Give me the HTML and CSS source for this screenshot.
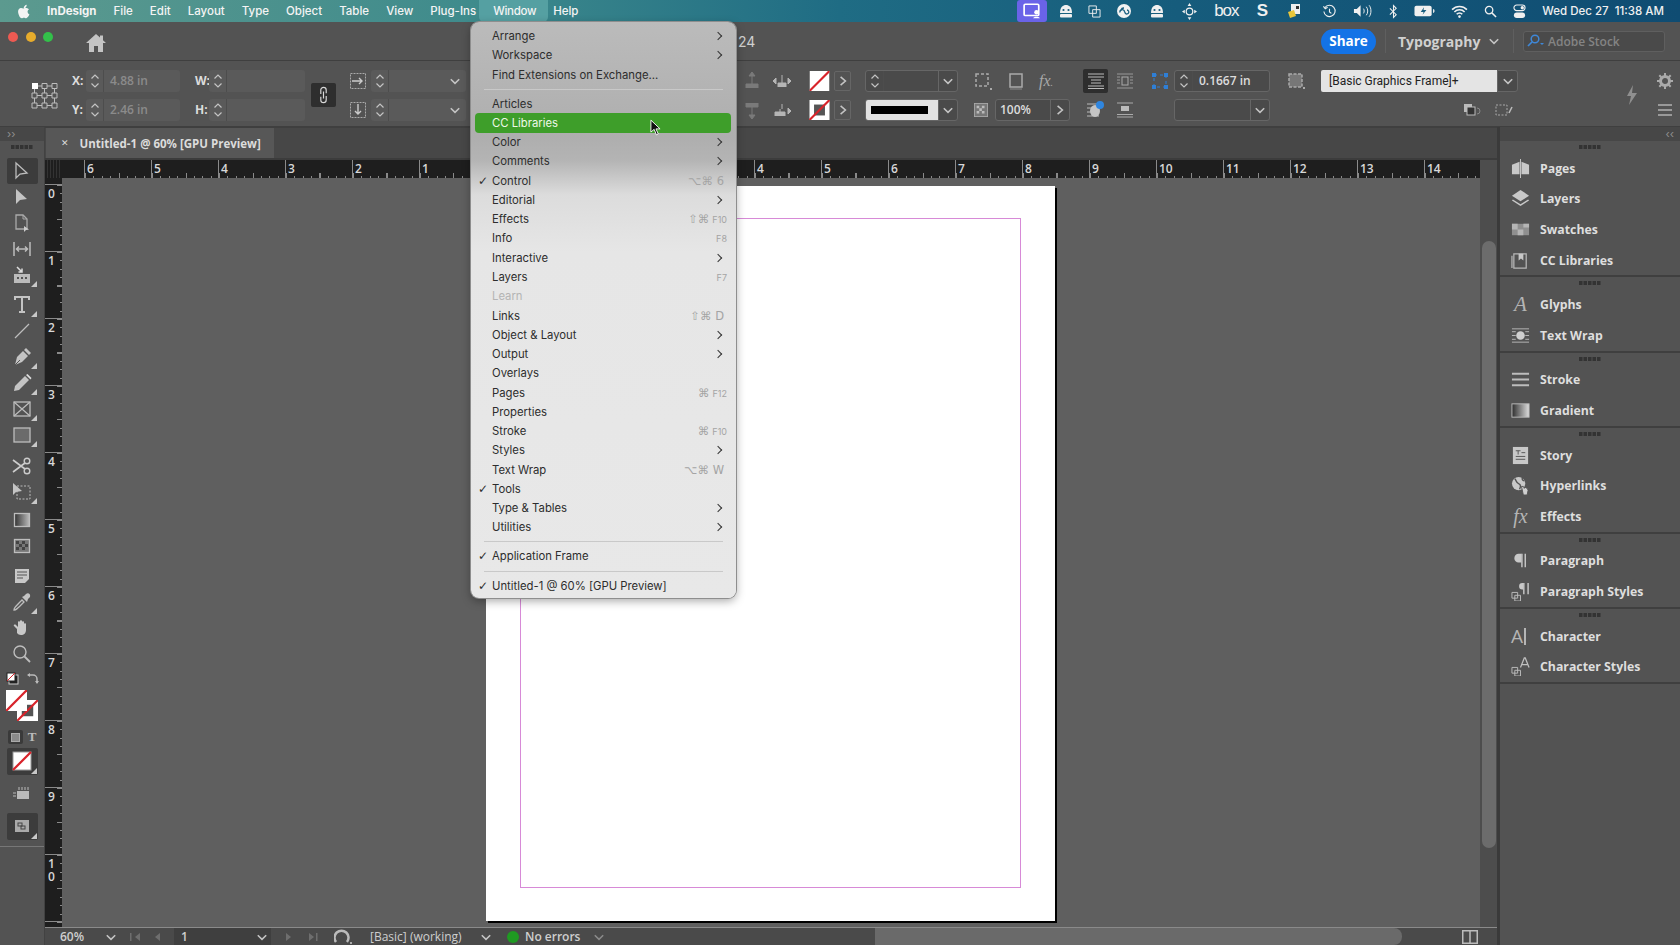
FILE: index.html
```html
<!DOCTYPE html>
<html lang="en">
<head>
    <meta charset="UTF-8">
    <meta name="viewport" content="width=device-width, initial-scale=1.0">
    <title>InDesign - Window menu</title>
    <link rel="stylesheet" href="styles.css">
</head>
<body>
    <svg class="defs" width="0" height="0">
        <symbol id="step" viewBox="0 0 12 18"><path d="M2.5 6.5 6 3l3.5 3.5M2.5 11.5 6 15l3.5-3.5" fill="none" stroke="currentColor" stroke-width="1.2"/></symbol>
        <symbol id="chev" viewBox="0 0 10 10"><path d="M1.5 3.5 5 7l3.5-3.5" fill="none" stroke="currentColor" stroke-width="1.3"/></symbol>
        <symbol id="right" viewBox="0 0 10 10"><path d="M3 1.5 7 5 3 8.5" fill="none" stroke="currentColor" stroke-width="1.3"/></symbol>
        <symbol id="robot" viewBox="0 0 16 16"><path d="M2 10C2 4 5 2 8 2s6 2 6 8z" fill="currentColor"/><rect x="2" y="11" width="12" height="3.5" rx="1" fill="currentColor"/><circle cx="5.5" cy="7" r="1.1" fill="#1a5f80"/><circle cx="10.5" cy="7" r="1.1" fill="#1a5f80"/></symbol>
        <symbol id="grip" viewBox="0 0 22 4"><path d="M0 0h3.5v4H0zM4.5 0H8v4H4.500zM9 0h3.500v4H9zM13.500 0H17v4h-3.500zM18 0h3.500v4H18z" fill="#333"/></symbol>
        <symbol id="slash" viewBox="0 0 22 22"><rect width="22" height="22" fill="#fff"/><path d="M0 22 22 0" stroke="#d8232a" stroke-width="2.4"/></symbol>
    </svg>

    <!-- mac menu bar -->
    <header class="menubar">
        <svg class="apple" viewBox="0 0 16 18"><path d="M11.300 1c.1 1.200-.4 2.200-1 3-.7.800-1.700 1.300-2.600 1.200-.1-1.100.4-2.200 1-2.900C9.400 1.500 10.500 1 11.300 1zM14 6.300c-1 .7-1.700 1.700-1.700 3 0 1.500.9 2.600 2.200 3.100-.3 1-.8 1.900-1.400 2.700-.7 1-1.500 1.900-2.600 1.900-1 0-1.400-.6-2.600-.6s-1.600.6-2.600.6c-1.100 0-1.900-1-2.700-2.100C1.400 12.500.9 10.700.9 9c0-2.700 1.800-4.200 3.500-4.200 1.100 0 2 .7 2.700.7.700 0 1.700-.8 3-.8 1 0 2.900.4 3.900 1.600z" fill="#f4f4f4"/></svg>
        <nav class="mainmenu">
            <span class="app">InDesign</span>
            <span>File</span>
            <span>Edit</span>
            <span>Layout</span>
            <span>Type</span>
            <span>Object</span>
            <span>Table</span>
            <span>View</span>
            <span>Plug-Ins</span>
            <span class="open">Window</span>
            <span>Help</span>
        </nav>
        <div class="tray">
            <span class="tray-on"><svg viewBox="0 0 16 14" width="18" height="16"><rect x="1" y="1" width="13" height="10" rx="1" fill="none" stroke="#fff" stroke-width="1.500"/><circle cx="12" cy="8" r="2" fill="#fff"/><path d="M9 13.500c0-2 6-2 6 0z" fill="#fff"/></svg></span>
            <span><svg width="16" height="16"><use href="#robot"/></svg></span>
            <span><svg viewBox="0 0 14 14" width="13" height="13"><path d="M1 1h8v8H1zM5 5h8v8H5z" fill="none" stroke="currentColor"/></svg></span>
            <span><svg viewBox="0 0 16 16" width="16" height="16"><circle cx="8" cy="8" r="7" fill="#f2f2f2"/><path d="M4 9.500a2.300 2.300 0 0 1 4.500-1l1 2a2 2 0 1 0 1.500-3.500M8 5a3 3 0 0 0-3 2" fill="none" stroke="#1a5f80" stroke-width="1.300"/></svg></span>
            <span><svg width="16" height="16"><use href="#robot"/></svg></span>
            <span><svg viewBox="0 0 16 18" width="15" height="17"><circle cx="8" cy="9" r="3.500" fill="none" stroke="currentColor" stroke-width="1.300"/><path d="M8 0l2 3H6zM8 18l2-3H6zM0 9l3-2v4zM16 9l-3-2v4z" fill="currentColor"/></svg></span>
            <span class="tray-word">box</span>
            <span class="tray-s">S</span>
            <span><svg viewBox="0 0 16 16" width="16" height="16"><path d="M4 1h9v10H4z" fill="#eee"/><path d="M1 9l6-2 2 6-6 2z" fill="#e8c63a"/><path d="M9 3h3v3H9z" fill="#333"/></svg></span>
            <span><svg viewBox="0 0 16 16" width="15" height="15"><path d="M3 4a6 6 0 1 1-1 4" fill="none" stroke="currentColor" stroke-width="1.200"/><path d="M1.500 2.500 3.500 5 6 3.500M8 5v3.500l2 1.500" fill="none" stroke="currentColor" stroke-width="1.200"/></svg></span>
            <span><svg viewBox="0 0 20 14" width="19" height="14"><path d="M1 5h3l4-4v12l-4-4H1z" fill="currentColor"/><path d="M11 4.500c1 1.500 1 3.500 0 5M14 2.500c2 2.500 2 6.500 0 9M17 1c2.500 3 2.500 9 0 12" fill="none" stroke="currentColor"/></svg></span>
            <span><svg viewBox="0 0 10 16" width="9" height="15"><path d="M1 4.500l7 7L5 14.500V1.500l3 3-7 7" fill="none" stroke="currentColor" stroke-width="1.200"/></svg></span>
            <span><svg viewBox="0 0 22 12" width="21" height="12"><rect x=".5" y=".5" width="18" height="11" rx="2" fill="currentColor"/><path d="M20 4v4c1 0 1.500-1 1.500-2s-.5-2-1.500-2z" fill="currentColor"/><path d="M10.500 2 7 7h3l-1 3 4-5h-3z" fill="#1a5f80"/></svg></span>
            <span><svg viewBox="0 0 18 14" width="17" height="13"><path d="M1 5a11 11 0 0 1 16 0M3.500 7.500a7.500 7.500 0 0 1 11 0M6 10a4 4 0 0 1 6 0" fill="none" stroke="currentColor" stroke-width="1.700"/><circle cx="9" cy="12.500" r="1.400" fill="currentColor"/></svg></span>
            <span><svg viewBox="0 0 14 14" width="13" height="13"><circle cx="5.500" cy="5.500" r="4" fill="none" stroke="currentColor" stroke-width="1.400"/><path d="M8.500 8.500 13 13" stroke="currentColor" stroke-width="1.600"/></svg></span>
            <span><svg viewBox="0 0 14 16" width="13" height="15"><rect x="1" y="1" width="12" height="6" rx="3" fill="none" stroke="currentColor" stroke-width="1.200"/><circle cx="10" cy="4" r="1.800" fill="currentColor"/><rect x="1" y="9" width="12" height="6" rx="3" fill="currentColor"/></svg></span>
            <span class="clock">Wed Dec 27&nbsp; 11:38 AM</span>
        </div>
    </header>

    <div class="window">
        <!-- title row -->
        <div class="titlebar">
            <div class="lights"><i class="red"></i><i class="amber"></i><i class="green"></i></div>
            <svg class="home" viewBox="0 0 20 18"><path d="M10 0 0 9h3v9h5v-6h4v6h5V9h3l-3-2.700V1.500h-3V3.600z" fill="#c4c4c4"/></svg>
            <span class="year">24</span>
            <button class="share">Share</button>
            <span class="tsep"></span>
            <span class="workspace">Typography</span>
            <svg class="i ws-chev"><use href="#chev"/></svg>
            <span class="tsep"></span>
            <div class="stock">
                <svg viewBox="0 0 18 14" width="18" height="14"><circle cx="9" cy="5" r="3.800" fill="none" stroke="#3f88d8" stroke-width="1.500"/><path d="M6 8 2 12" stroke="#3f88d8" stroke-width="1.700"/><path d="M14 9h4l-2 2z" fill="#3f88d8"/></svg>
                <span>Adobe Stock</span>
            </div>
        </div>

        <!-- control panel -->
        <div class="controlbar">
            <div class="c-ref">
                <svg class="vgrip" viewBox="0 0 4 22"><use href="#grip" transform="rotate(90 2 2)"/></svg>
                <svg class="refpoint" viewBox="0 0 27 27"><g fill="none" stroke="#bcbcbc"><path d="M11 1.500h5v5h-5zM21 1.500h5v5h-5zM1 11h5v5H1zM11 11h5v5h-5zM21 11h5v5h-5zM1 21h5v5H1zM11 21h5v5h-5zM21 21h5v5h-5zM6 4h5M16 4h5M6 13.500h5M16 13.500h5M6 23.500h5M16 23.500h5M3.500 6.500V11M13.500 6.500V11M23.500 6.500V11M3.500 16v5M13.500 16v5M23.500 16v5"/></g><rect x="1" y="1" width="6" height="6" fill="#fff"/></svg>
            </div>
            <div class="cgroup c-xy">
                <div class="crow"><label>X:</label><div class="field f94"><span class="step"><svg class="i"><use href="#step"/></svg></span><span class="val dim">4.88 in</span></div></div>
                <div class="crow"><label>Y:</label><div class="field f94"><span class="step"><svg class="i"><use href="#step"/></svg></span><span class="val dim">2.46 in</span></div></div>
            </div>
            <div class="cgroup c-wh">
                <div class="crow"><label>W:</label><div class="field f96"><span class="step"><svg class="i"><use href="#step"/></svg></span></div></div>
                <div class="crow"><label>H:</label><div class="field f96"><span class="step"><svg class="i"><use href="#step"/></svg></span></div></div>
            </div>
            <div class="c-link">
                <span class="darkbtn link"><svg viewBox="0 0 12 20" width="11" height="18"><path d="M3 9V4.500a3 3 0 0 1 6 0V8M9 11v4.500a3 3 0 0 1-6 0V12M6 6v8" fill="none" stroke="#d8d8d8" stroke-width="1.300"/></svg></span>
            </div>
            <div class="cgroup c-flip">
                <div class="crow"><svg class="ico16" viewBox="0 0 16 16"><rect x=".5" y=".5" width="15" height="15" fill="none" stroke="#aaa" stroke-dasharray="2 1"/><path d="M2 8h10M9 5l3 3-3 3" fill="none" stroke="#ccc" stroke-width="1.400"/></svg><div class="field f95"><span class="step"><svg class="i"><use href="#step"/></svg></span><svg class="i end"><use href="#chev"/></svg></div></div>
                <div class="crow"><svg class="ico16" viewBox="0 0 16 16"><rect x=".5" y=".5" width="15" height="15" fill="none" stroke="#aaa" stroke-dasharray="2 1"/><path d="M8 2v10M5 9l3 3 3-3" fill="none" stroke="#ccc" stroke-width="1.400"/></svg><div class="field f95"><span class="step"><svg class="i"><use href="#step"/></svg></span><svg class="i end"><use href="#chev"/></svg></div></div>
            </div>
            <div class="cgroup c-align">
                <div class="crow">
                    <svg class="ico20 faint" viewBox="0 0 20 20"><path d="M10 1l3 4H7zM10 5v5M4 17v-4h12v4M10 10v7" fill="currentColor" stroke="currentColor"/></svg>
                    <svg class="ico20" viewBox="0 0 20 20"><path d="M1 10l3-3v6zM19 10l-3-3v6zM10 4v5M6 16v-4h8v4M10 9v7" fill="currentColor" stroke="currentColor"/></svg>
                </div>
                <div class="crow">
                    <svg class="ico20 faint" viewBox="0 0 20 20"><path d="M10 19l3-4H7zM10 15v-5M4 3v4h12V3M10 10V3" fill="currentColor" stroke="currentColor"/></svg>
                    <svg class="ico20" viewBox="0 0 20 20"><path d="M19 11l-3-3v6zM10 4v5M3 16v-4h10v4M8 9v7" fill="currentColor" stroke="currentColor"/></svg>
                </div>
            </div>
            <div class="cgroup c-swatch">
                <div class="crow"><svg class="swatch" viewBox="0 0 22 22"><use href="#slash"/></svg><span class="boxbtn"><svg class="i"><use href="#right"/></svg></span></div>
                <div class="crow"><svg class="swatch" viewBox="0 0 22 22"><rect width="22" height="22" fill="#fff"/><rect x="5" y="5" width="12" height="12" fill="#555"/><path d="M0 22 22 0" stroke="#d8232a" stroke-width="2.400"/></svg><span class="boxbtn"><svg class="i"><use href="#right"/></svg></span></div>
            </div>
            <div class="cgroup c-stroke">
                <div class="crow"><div class="field outlined f93"><span class="step"><svg class="i"><use href="#step"/></svg></span><span class="chevbox end"><svg class="i"><use href="#chev"/></svg></span></div></div>
                <div class="crow"><div class="field outlined f93"><span class="strokeprev"><i></i></span><span class="chevbox"><svg class="i"><use href="#chev"/></svg></span></div></div>
            </div>
            <div class="cgroup c-frame">
                <div class="crow fx-row">
                    <svg class="ico20" viewBox="0 0 20 20"><path d="M3 3h12v12H3z" fill="none" stroke="#aaa" stroke-width="1.500" stroke-dasharray="3 2"/><path d="M17 17h2v2h-2z" fill="#aaa"/></svg>
                    <svg class="ico20" viewBox="0 0 20 20"><rect x="4" y="3" width="12" height="13" fill="none" stroke="#aaa" stroke-width="1.500"/><path d="M4 18h12" stroke="#777" stroke-width="1.500"/></svg>
                    <span class="fx">fx<small>.</small></span>
                </div>
                <div class="crow">
                    <svg class="opac" viewBox="0 0 16 16"><rect x=".5" y=".5" width="15" height="15" fill="#777" stroke="#aaa"/><path d="M3 3h3v3H3zM9 3h3v3H9zM6 6h3v3H6zM3 9h3v3H3zM9 9h3v3H9z" fill="#bbb"/></svg>
                    <div class="field outlined f75"><span class="val">100%</span><span class="chevbox end"><svg class="i"><use href="#right"/></svg></span></div>
                </div>
            </div>
            <div class="cgroup c-wrap">
                <div class="crow">
                    <span class="darkbtn"><svg class="ico16" viewBox="0 0 16 16"><path d="M0 1h16M0 4h16M3 7h10M3 10h10M0 13h16M0 15.500h16" stroke="#bbb"/></svg></span>
                    <svg class="ico16 gap9" viewBox="0 0 16 16"><rect x="5" y="4" width="6" height="8" fill="none" stroke="#aaa"/><path d="M0 1h16M0 4h3M13 4h3M0 7h3M13 7h3M0 10h3M13 10h3M0 15h16" stroke="#999"/></svg>
                </div>
                <div class="crow">
                    <span class="plainbtn"><svg class="ico20" viewBox="0 0 20 20"><path d="M1 4h12M1 8h6M1 12h6M1 16h12" stroke="#bbb"/><ellipse cx="9" cy="11" rx="5" ry="6" fill="#c4c4c4"/><circle cx="14" cy="5" r="4" fill="#2f86e0"/></svg></span>
                    <svg class="ico16 gap9" viewBox="0 0 16 16"><path d="M0 1h16M0 15h16M0 12.500h16" stroke="#aaa"/><rect x="4" y="4" width="8" height="5" fill="#bbb"/></svg>
                </div>
            </div>
            <div class="cgroup c-corner">
                <div class="crow">
                    <svg class="ico20" viewBox="0 0 20 20"><path d="M4 4h12v12H4z" fill="none" stroke="#2f7fd6" stroke-dasharray="3 3"/><path d="M2 2h4v4H2zM14 2h4v4h-4zM2 14h4v4H2zM14 14h4v4h-4z" fill="#2f7fd6"/></svg>
                    <div class="field outlined f96 g4"><span class="step"><svg class="i"><use href="#step"/></svg></span><span class="val">0.1667 in</span></div>
                </div>
                <div class="crow">
                    <span class="ico20"></span>
                    <div class="field outlined f96 g4"><span class="chevbox end"><svg class="i"><use href="#chev"/></svg></span></div>
                </div>
            </div>
            <div class="cgroup c-fit">
                <div class="crow"><svg class="ico20" viewBox="0 0 20 20"><rect x="3" y="3" width="13" height="13" fill="#777" stroke="#aaa" stroke-width="1.500" stroke-dasharray="3 1.500"/><path d="M17 16h2v2h-2z" fill="#aaa"/></svg></div>
                <div class="crow"></div>
            </div>
            <div class="cgroup c-style">
                <div class="crow"><div class="objstyle"><span>[Basic Graphics Frame]+</span></div><span class="chevbox wide"><svg class="i"><use href="#chev"/></svg></span></div>
                <div class="crow row-end">
                    <svg class="ico20" viewBox="0 0 20 16"><rect x="1" y="2" width="8" height="8" fill="#bbb"/><rect x="4" y="5" width="8" height="8" fill="#333" stroke="#bbb"/><path d="M14 6a3 3 0 1 1 0 6" fill="none" stroke="#888"/></svg>
                    <svg class="ico20 g11" viewBox="0 0 20 16"><rect x="2" y="3" width="11" height="10" fill="none" stroke="#aaa" stroke-dasharray="2 1.500"/><path d="M15 11l3-6" stroke="#bbb" stroke-width="1.500"/></svg>
                </div>
            </div>
            <div class="c-end">
                <svg class="bolt" viewBox="0 0 12 20"><path d="M7 0 1 11h4L3 20l8-12H6z" fill="#8f8f8f"/></svg>
                <div class="end-col">
                    <svg class="ico16" viewBox="0 0 16 16"><circle cx="8" cy="8" r="4.500" fill="none" stroke="#aaa" stroke-width="3"/><path d="M8 0v3M8 13v3M0 8h3M13 8h3M2.300 2.300l2 2M11.700 11.700l2 2M2.300 13.700l2-2M11.700 4.300l2-2" stroke="#aaa" stroke-width="2"/></svg>
                    <svg class="ico16" viewBox="0 0 16 16"><path d="M1 3h14M1 8h14M1 13h14" stroke="#999" stroke-width="2"/></svg>
                </div>
            </div>
        </div>

        <div class="workarea">
            <!-- tools -->
            <aside class="toolbar">
                <div class="strip"><span class="dbl">&#8250;&#8250;</span></div>
                <svg class="pgrip tools-grip" viewBox="0 0 22 4"><use href="#grip"/></svg>
                <div class="tool dark"><svg viewBox="0 0 20 20"><path d="M4 2v15l4-4 7-1z" fill="none" stroke="#bdbdbd" stroke-width="1.300"/></svg></div>
                <div class="tool"><svg viewBox="0 0 20 20"><path d="M4 2v15l4-4 7-1z" fill="#c4c4c4"/></svg></div>
                <div class="tool"><svg viewBox="0 0 20 20"><path d="M4 2h7l4 4v10H4z" fill="none" stroke="#aaa" stroke-width="1.300"/><path d="M11 2v4h4" fill="none" stroke="#aaa"/><path d="M12 13v6l2-2 3-.5z" fill="#ccc"/></svg></div>
                <div class="tool"><svg viewBox="0 0 20 20"><path d="M2 3v14M18 3v14M5 10h10M7 7.500 4.500 10 7 12.500M13 7.500l2.500 2.500-2.500 2.500" fill="none" stroke="#bdbdbd" stroke-width="1.500"/></svg></div>
                <div class="tool sub"><svg viewBox="0 0 20 20"><path d="M2 9v9h16V9" fill="#bbb"/><path d="M5 2l5 5M6.500 7H10V3.500" fill="none" stroke="#ddd" stroke-width="1.500"/><path d="M5 12h2v2H5zM9 12h2v2H9zM13 12h2v2h-2z" fill="#555"/></svg></div>
                <div class="tool sub sp4"><svg viewBox="0 0 20 20"><path d="M3 5V2h14v3M10 2v15M7 17h6" fill="none" stroke="#c4c4c4" stroke-width="2"/></svg></div>
                <div class="tool"><svg viewBox="0 0 20 20"><path d="M3 17 17 3" stroke="#bdbdbd" stroke-width="1.300"/></svg></div>
                <div class="tool sub"><svg viewBox="0 0 20 20"><path d="M3 18l2-8 6-6 5 5-6 6z" fill="#c4c4c4"/><path d="M12 3l2-2 5 5-2 2z" fill="#c4c4c4"/><path d="M3 18l5-5" stroke="#555"/></svg></div>
                <div class="tool sub"><svg viewBox="0 0 20 20"><path d="M2 18l1-5L13 3l4 4L7 17z" fill="#c4c4c4"/><path d="M14 2l1.500-1 4 4-1 1.500z" fill="#ddd"/></svg></div>
                <div class="tool sub"><svg viewBox="0 0 20 20"><rect x="2" y="3" width="16" height="14" fill="none" stroke="#bdbdbd" stroke-width="1.300"/><path d="M2 3l16 14M18 3 2 17" stroke="#bdbdbd" stroke-width="1.200"/></svg></div>
                <div class="tool sub"><svg viewBox="0 0 20 20"><rect x="2" y="3" width="16" height="14" fill="#6b6b6b" stroke="#bdbdbd" stroke-width="1.300"/></svg></div>
                <div class="tool sp5"><svg viewBox="0 0 20 20"><circle cx="15" cy="5" r="2.800" fill="none" stroke="#ccc" stroke-width="1.400"/><circle cx="15" cy="15" r="2.800" fill="none" stroke="#ccc" stroke-width="1.400"/><path d="M1 4l12 9M1 16 13 7" stroke="#ccc" stroke-width="1.600"/></svg></div>
                <div class="tool sub"><svg viewBox="0 0 20 20"><rect x="5" y="4" width="13" height="13" fill="none" stroke="#bbb" stroke-dasharray="2 1.500"/><path d="M1 1v12l3-3 6-1z" fill="#c4c4c4"/></svg></div>
                <div class="tool sp2"><svg viewBox="0 0 20 20"><defs><linearGradient id="g1"><stop offset="0" stop-color="#333"/><stop offset="1" stop-color="#bbb"/></linearGradient></defs><rect x="2.500" y="3.500" width="15" height="13" fill="url(#g1)" stroke="#bdbdbd" stroke-width="1.300"/></svg></div>
                <div class="tool"><svg viewBox="0 0 20 20"><rect x="2.500" y="3.500" width="15" height="13" fill="#777" stroke="#bdbdbd" stroke-width="1.300"/><path d="M4 5h3v3H4zM10 5h3v3h-3zM7 8h3v3H7zM13 8h3v3h-3zM4 11h3v3H4zM10 11h3v3h-3z" fill="#444"/></svg></div>
                <div class="tool sp4"><svg viewBox="0 0 20 20"><path d="M3 3h14v10l-4 4H3z" fill="#c8c8c8"/><path d="M5 6h10M5 9h10M5 12h6" stroke="#555"/></svg></div>
                <div class="tool sub"><svg viewBox="0 0 20 20"><path d="M2 18c0-2 1-3 8-10l2 2c-7 7-8 8-10 8z" fill="none" stroke="#bdbdbd" stroke-width="1.300"/><path d="M10 5l5 5 1-3 2-2c1-3-2-5-4-3l-2 2z" fill="#c4c4c4"/></svg></div>
                <div class="tool"><svg viewBox="0 0 20 20"><path d="M5 11 2 8c-1-1 1-2 2-1l2 2V4c0-1 2-1 2 0v3-4c0-1 2-1 2 0v4-3c0-1 2-1 2 0v4-2c0-1 2-1 2 0v6c0 3-2 5-5 5-2 0-3-1-4-2z" fill="#c8c8c8"/></svg></div>
                <div class="tool"><svg viewBox="0 0 20 20"><circle cx="8" cy="8" r="6" fill="none" stroke="#bdbdbd" stroke-width="1.400"/><path d="M12.500 12.500 18 18" stroke="#bdbdbd" stroke-width="1.800"/></svg></div>
                <div class="colorswap">
                    <svg viewBox="0 0 13 13" width="13" height="13"><rect x="3" y="3" width="9" height="9" fill="#222" stroke="#ccc"/><rect x="1" y="1" width="8" height="8" fill="#fff" stroke="#222"/><path d="M1 9l8-8" stroke="#d8232a"/></svg>
                    <svg viewBox="0 0 13 13" width="13" height="13"><path d="M2 3h5a4 4 0 0 1 4 4v4" fill="none" stroke="#bbb" stroke-width="1.500"/><path d="M1 3l3-2v4zM11 12l-2-3h4z" fill="#bbb"/></svg>
                </div>
                <div class="fillstroke">
                    <svg class="fs-stroke" viewBox="0 0 22 22"><rect width="22" height="22" fill="#fff"/><rect x="5" y="5" width="12" height="12" fill="#535353"/><path d="M0 22 22 0" stroke="#d8232a" stroke-width="2.200"/></svg>
                    <svg class="fs-fill" viewBox="0 0 22 22"><use href="#slash"/></svg>
                </div>
                <div class="fmtrow">
                    <span class="fmtbtn"><i></i></span>
                    <span class="fmt-t">T</span>
                </div>
                <div class="tool dark big sub"><svg viewBox="0 0 20 20"><rect x="1" y="1" width="18" height="18" fill="#fff" stroke="#999"/><path d="M1 19 19 1" stroke="#d8232a" stroke-width="2.200"/></svg></div>
                <div class="tool view"><svg viewBox="0 0 20 20"><rect x="5" y="8" width="12" height="8" fill="#bbb"/><path d="M7 4v3M10 4v3M13 4v3M16 4v3M1 10h3M1 13h3" stroke="#bbb"/></svg></div>
                <div class="tool dark big sub lastbtn"><svg viewBox="0 0 20 20"><rect x="3" y="4" width="14" height="12" fill="#aaa"/><rect x="6" y="7" width="4" height="3" fill="none" stroke="#444"/><rect x="9" y="10" width="4" height="3" fill="none" stroke="#444"/></svg></div>
                <div class="toolend"></div>
            </aside>

            <!-- document area -->
            <section class="center">
                <div class="tabbar">
                    <div class="tab"><span class="tabx">&#10005;</span><span>Untitled-1 @ 60% [GPU Preview]</span></div>
                </div>
                <div class="hruler-row">
                    <div class="corner"></div>
                    <div class="hruler">
                        <div class="hlead"></div>
                        <div class="hcell">6</div><div class="hcell">5</div><div class="hcell">4</div><div class="hcell">3</div><div class="hcell">2</div><div class="hcell">1</div><div class="hcell"></div><div class="hcell"></div><div class="hcell"></div><div class="hcell"></div><div class="hcell">4</div><div class="hcell">5</div><div class="hcell">6</div><div class="hcell">7</div><div class="hcell">8</div><div class="hcell">9</div><div class="hcell">10</div><div class="hcell">11</div><div class="hcell">12</div><div class="hcell">13</div><div class="hcell">14</div>
                    </div>
                    <div class="rulerend"></div>
                </div>
                <div class="docrow">
                    <div class="vruler">
                        <div class="vlead"></div>
                        <div class="vcell">0</div><div class="vcell">1</div><div class="vcell">2</div><div class="vcell">3</div><div class="vcell">4</div><div class="vcell">5</div><div class="vcell">6</div><div class="vcell">7</div><div class="vcell">8</div><div class="vcell">9</div><div class="vcell">1<br>0</div><div class="vcell"></div>
                    </div>
                    <div class="canvas">
                        <div class="page"><div class="guide"></div></div>
                    </div>
                    <div class="vscroll"><div class="vthumb"></div></div>
                </div>
                <div class="statusbar">
                    <span class="st-zoom">60%</span>
                    <svg class="i st-c1"><use href="#chev"/></svg>
                    <svg class="st-nav" viewBox="0 0 60 12" width="60" height="12"><path d="M3 2h1.500v8H3zM13 2v8l-5-4zM33 2v8l-5-4z" fill="#6e6e6e"/></svg>
                    <div class="st-page"><span>1</span><span class="st-pagechev"><svg class="i"><use href="#chev"/></svg></span></div>
                    <svg class="st-nav2" viewBox="0 0 40 12" width="40" height="12"><path d="M3 2v8l5-4zM26 2v8l5-4zM33 2h1.500v8H33z" fill="#6e6e6e"/></svg>
                    <svg class="st-gauge" viewBox="0 0 18 16" width="18" height="16"><path d="M2 13a7 7 0 1 1 11 0" fill="none" stroke="#bbb" stroke-width="2.500"/><path d="M16 13h2v2h-2z" fill="#aaa"/></svg>
                    <span class="st-pre">[Basic] (working)</span>
                    <svg class="i st-c2"><use href="#chev"/></svg>
                    <i class="st-dot"></i>
                    <span class="st-err">No errors</span>
                    <svg class="i st-c3"><use href="#chev"/></svg>
                    <div class="hthumb"></div>
                    <svg class="st-split" viewBox="0 0 16 14" width="16" height="14"><path d="M.75.750h14.500v12.500H.75zM8 1v12" fill="none" stroke="#bbb" stroke-width="1.500"/></svg>
                </div>
            </section>

            <!-- docked panels -->
            <aside class="panels">
                <div class="strip right"><span class="dbl">&#8249;&#8249;</span></div>
                <div class="pgroup">
                    <svg class="pgrip" viewBox="0 0 22 4"><use href="#grip"/></svg>
                    <div class="prow"><svg viewBox="0 0 20 20"><path d="M1 6l8-3v13H1zM19 6l-8-3v13h8z" fill="#c8c8c8"/><path d="M10 0v20" stroke="#c8c8c8"/></svg><span>Pages</span></div>
                    <div class="prow"><svg viewBox="0 0 20 20"><path d="M10 1l9 6-9 6-9-6z" fill="#c8c8c8"/><path d="M2 11l8 5 8-5 1 1-9 6-9-6z" fill="#c8c8c8"/></svg><span>Layers</span></div>
                    <div class="prow"><svg viewBox="0 0 20 20"><rect x="1" y="4" width="18" height="12" fill="#8f8f8f"/><path d="M1 4h6v6H1zM13 4h6v4h-6zM7 10h6v6H7z" fill="#b5b5b5"/></svg><span>Swatches</span></div>
                    <div class="prow"><svg viewBox="0 0 20 20"><path d="M3 3h13v15H3zM1 5v13" fill="none" stroke="#b8b8b8" stroke-width="1.300"/><path d="M8 3h5v7l-2.500-2L8 10z" fill="#c8c8c8"/></svg><span>CC Libraries</span></div>
                </div>
                <div class="pgroup">
                    <svg class="pgrip" viewBox="0 0 22 4"><use href="#grip"/></svg>
                    <div class="prow"><span class="pglyph script">A</span><span>Glyphs</span></div>
                    <div class="prow"><svg viewBox="0 0 20 20"><path d="M1 3h18M1 6h4M15 6h4M1 10h4M15 10h4M1 14h4M15 14h4M1 17h18" stroke="#b8b8b8"/><circle cx="10" cy="10" r="4.500" fill="#cfcfcf"/></svg><span>Text Wrap</span></div>
                </div>
                <div class="pgroup">
                    <svg class="pgrip" viewBox="0 0 22 4"><use href="#grip"/></svg>
                    <div class="prow"><svg viewBox="0 0 20 20"><path d="M1 4h18M1 10h18M1 16h18" stroke="#bdbdbd" stroke-width="2"/></svg><span>Stroke</span></div>
                    <div class="prow"><svg viewBox="0 0 20 20"><defs><linearGradient id="g2"><stop offset="0" stop-color="#2d2d2d"/><stop offset="1" stop-color="#ddd"/></linearGradient></defs><rect x="1" y="3" width="18" height="14" fill="url(#g2)" stroke="#bbb"/></svg><span>Gradient</span></div>
                </div>
                <div class="pgroup">
                    <svg class="pgrip" viewBox="0 0 22 4"><use href="#grip"/></svg>
                    <div class="prow"><svg viewBox="0 0 20 20"><rect x="2" y="1" width="16" height="18" fill="#c8c8c8"/><path d="M5 5h5M7.500 5v4M11 7h4M5 11h10M5 14h10" stroke="#555"/></svg><span>Story</span></div>
                    <div class="prow"><svg viewBox="0 0 20 20"><circle cx="8" cy="8" r="7" fill="#c8c8c8"/><path d="M4 3c2 2 1 4 4 5s2 4 1 6M12 2c-1 2 1 3 2 3" fill="none" stroke="#535353" stroke-width="1.500"/><path d="M11 11l2 0 1 2 1-1 2 1 1 2-1 5h-4z" fill="#cfcfcf" stroke="#535353"/></svg><span>Hyperlinks</span></div>
                    <div class="prow"><span class="pglyph fxg">fx</span><span>Effects</span></div>
                </div>
                <div class="pgroup">
                    <svg class="pgrip" viewBox="0 0 22 4"><use href="#grip"/></svg>
                    <div class="prow"><svg viewBox="0 0 20 20"><path d="M15 3H8a4.500 4.500 0 0 0 0 9h3V3" fill="#c8c8c8"/><path d="M11.500 3v14M15 3v14" stroke="#c8c8c8" stroke-width="1.500"/></svg><span>Paragraph</span></div>
                    <div class="prow"><svg viewBox="0 0 20 20"><path d="M18 1h-6a3.500 3.500 0 0 0 0 7h1V1" fill="#c8c8c8"/><path d="M13.500 1v12M18 1v12" stroke="#c8c8c8" stroke-width="1.500"/><path d="M1 11h6v6H1zM4 14h6v6H4z" fill="#535353" stroke="#bbb"/></svg><span>Paragraph Styles</span></div>
                </div>
                <div class="pgroup">
                    <svg class="pgrip" viewBox="0 0 22 4"><use href="#grip"/></svg>
                    <div class="prow"><span class="pglyph ag">A<em></em></span><span>Character</span></div>
                    <div class="prow"><svg viewBox="0 0 20 20"><path d="M10 11l4-10h1l4 10M11.500 8h6" fill="none" stroke="#c0c0c0" stroke-width="1.300"/><path d="M1 11h6v6H1zM4 14h6v6H4z" fill="#535353" stroke="#bbb"/></svg><span>Character Styles</span></div>
                </div>
            </aside>
        </div>
    </div>

    <!-- open Window menu -->
    <div class="menu">
        <div class="mi sub">Arrange</div>
        <div class="mi sub">Workspace</div>
        <div class="mi">Find Extensions on Exchange...</div>
        <div class="msep"></div>
        <div class="mi">Articles</div>
        <div class="mi hot">CC Libraries</div>
        <div class="mi sub">Color</div>
        <div class="mi sub">Comments</div>
        <div class="mi on">Control<kbd>&#8997;&#8984; 6</kbd></div>
        <div class="mi sub">Editorial</div>
        <div class="mi">Effects<kbd>&#8679;&#8984;<small>F10</small></kbd></div>
        <div class="mi">Info<kbd><small>F8</small></kbd></div>
        <div class="mi sub">Interactive</div>
        <div class="mi">Layers<kbd><small>F7</small></kbd></div>
        <div class="mi off">Learn</div>
        <div class="mi">Links<kbd>&#8679;&#8984; D</kbd></div>
        <div class="mi sub">Object &amp; Layout</div>
        <div class="mi sub">Output</div>
        <div class="mi">Overlays</div>
        <div class="mi">Pages<kbd>&#8984;<small>F12</small></kbd></div>
        <div class="mi">Properties</div>
        <div class="mi">Stroke<kbd>&#8984;<small>F10</small></kbd></div>
        <div class="mi sub">Styles</div>
        <div class="mi">Text Wrap<kbd>&#8997;&#8984; W</kbd></div>
        <div class="mi on">Tools</div>
        <div class="mi sub">Type &amp; Tables</div>
        <div class="mi sub">Utilities</div>
        <div class="msep"></div>
        <div class="mi on">Application Frame</div>
        <div class="msep"></div>
        <div class="mi on">Untitled-1 @ 60% [GPU Preview]</div>
    </div>
    <svg class="cursor" viewBox="0 0 12 18"><path d="M1 1v13l3.500-3 2.500 6 2-1-2.500-5.500H11z" fill="#111" stroke="#fff" stroke-width="1"/></svg>
</body>
</html>
```

FILE: styles.css
```css
* {
    box-sizing: border-box;
}
html, body {
    margin: 0;
    padding: 0;
}
body {
    width: 1680px;
    height: 945px;
    overflow: hidden;
    position: relative;
    background: #535353;
    color: #d8d8d8;
    font-family: Inter, "Liberation Sans", sans-serif;
    font-size: 12px;
}
.defs {
    display: block;
    height: 0;
}
svg {
    display: block;
    flex: none;
}
.i {
    width: 12px;
    height: 12px;
    color: #c4c4c4;
}

/* menu bar */
.menubar {
    height: 22px;
    display: flex;
    align-items: center;
    padding-right: 16px;
    background: linear-gradient(90deg, #5c9a8f 0%, #3f8b8c 28%, #1f6c84 50%, #165c7c 70%, #0f4c72 100%);
    color: #f4f4f4;
    font-size: 11.5px;
    font-weight: 500;
}
.apple {
    width: 14px;
    height: 15px;
    margin-left: 17px;
}
.mainmenu {
    display: flex;
    height: 22px;
    margin-left: 16px;
    align-items: center;
}
.mainmenu span {
    padding-right: 17px;
    white-space: nowrap;
}
.mainmenu .app {
    font-weight: 700;
}
.mainmenu .open {
    height: 22px;
    line-height: 22px;
    margin-left: -14px;
    margin-right: 5px;
    padding: 0 12px 0 14px;
    background: #55a0a2;
    border-radius: 0 0 5px 5px;
    letter-spacing: -.3px;
}
.tray {
    margin-left: auto;
    display: grid;
    grid-template-columns: 30px 38px 18px 42px 24px 40px 34px 38px 28px 40px 26px 36px 26px 44px 18px 40px auto;
    align-items: center;
    height: 22px;
    color: #f0f0f0;
}
.tray > span {
    display: flex;
    justify-content: center;
    align-items: center;
}
.tray-on {
    background: #6a63e8;
    height: 22px;
    border-radius: 3px;
}
.tray-word {
    font-family: "Liberation Sans", sans-serif;
    font-size: 17px;
    font-weight: 400;
    letter-spacing: -1px;
}
.tray-s {
    font-family: "Liberation Sans", sans-serif;
    font-size: 17px;
    font-weight: 700;
}
.tray .clock {
    justify-content: flex-start;
    white-space: nowrap;
    font-size: 11.5px;
    margin-left: 3px;
}

/* window chrome */
.window {
    height: 923px;
    display: flex;
    flex-direction: column;
}
.titlebar {
    height: 39px;
    flex: none;
    display: flex;
    align-items: center;
    background: #535353;
    border-bottom: 1px solid #3f3f3f;
}
.lights {
    display: flex;
    gap: 7.5px;
    margin-left: 8px;
    margin-top: -9px;
}
.lights i {
    width: 10px;
    height: 10px;
    border-radius: 50%;
}
.red { background: #ee5a52; }
.amber { background: #e8ac2c; }
.green { background: #33c04a; }
.home {
    width: 20px;
    height: 18px;
    margin-left: 33px;
    margin-top: 4px;
}
.year {
    margin-left: 632px;
    font-size: 14px;
    color: #d0d0d0;
    width: 583px;
}
.share {
    width: 55px;
    height: 25px;
    margin: 0;
    border: none;
    border-radius: 13px;
    background: #1473e6;
    color: #fff;
    font: 700 13.5px "Open Sans", sans-serif;
}
.tsep {
    width: 1px;
    height: 24px;
    background: #5f5f5f;
    margin-left: 9px;
}
.workspace {
    margin-left: 12px;
    font: 700 14px "Open Sans", sans-serif;
    color: #d0d0d0;
    width: 85px;
}
.ws-chev {
    margin-left: 5px;
    margin-right: 4px;
}
.stock {
    width: 142px;
    height: 21px;
    margin-left: 9px;
    display: flex;
    align-items: center;
    gap: 4px;
    padding-left: 2px;
    background: #4a4a4a;
    border: 1px solid #5f5f5f;
    border-radius: 3px;
    color: #848484;
    font: 600 12px "Open Sans", sans-serif;
}

/* control panel */
.controlbar {
    height: 66px;
    flex: none;
    display: flex;
    align-items: center;
    padding-top: 3px;
    background: #535353;
    border-bottom: 1px solid #3f3f3f;
}
.cgroup {
    display: flex;
    flex-direction: column;
    gap: 7px;
    flex: none;
}
.crow {
    display: flex;
    align-items: center;
    height: 22px;
}
.crow label {
    width: 14px;
    font: 700 12px "Open Sans", sans-serif;
    color: #dcdcdc;
}
.c-ref {
    width: 72px;
    flex: none;
    display: flex;
    align-items: center;
    padding-left: 4px;
}
.vgrip {
    width: 4px;
    height: 22px;
}
.refpoint {
    width: 27px;
    height: 27px;
    margin-left: 23px;
}
.c-xy { width: 123px; }
.c-wh { width: 116px; }
.c-link { width: 39px; flex: none; }
.c-flip { width: 392px; }
.c-align { width: 67px; }
.c-align .crow { gap: 10px; }
.c-swatch { width: 56px; }
.c-stroke { width: 108px; }
.c-frame { width: 110px; }
.c-wrap { width: 67px; }
.c-corner { width: 135px; }
.c-fit { width: 36px; padding-left: 1px; }
.c-style { width: 197px; }
.c-end {
    flex: 1;
    display: flex;
    align-items: center;
}
.field {
    display: flex;
    align-items: center;
    height: 22px;
    background: #5a5a5a;
    border-radius: 3px;
    position: relative;
}
.field.outlined {
    background: #4a4a4a;
    border: 1px solid #666;
}
.f94 { width: 94px; }
.f96 { width: 96px; }
.f95 { width: 95px; margin-left: 5px; }
.f93 { width: 93px; }
.f75 { width: 75px; margin-left: 7px; }
.g4 { margin-left: 4px; }
.step {
    width: 18px;
    height: 100%;
    display: flex;
    align-items: center;
    justify-content: center;
    color: #c4c4c4;
    border-right: 1px solid #4d4d4d;
}
.step svg {
    height: 18px;
}
.val {
    margin-left: 6px;
    font: 600 12px "Open Sans", sans-serif;
    color: #dcdcdc;
}
.val.dim {
    color: #8b8b8b;
}
.f75 .val {
    margin-left: 4px;
}
.end {
    margin-left: auto;
}
svg.end {
    margin-right: 5px;
}
.chevbox {
    width: 19px;
    height: 100%;
    display: flex;
    align-items: center;
    justify-content: center;
    border-left: 1px solid #666;
    flex: none;
}
.chevbox.wide {
    width: 21px;
    height: 22px;
    background: #4a4a4a;
    border: 1px solid #666;
    border-radius: 0 3px 3px 0;
}
.darkbtn {
    width: 25px;
    height: 24px;
    display: flex;
    align-items: center;
    justify-content: center;
    background: #2e2e2e;
    border-radius: 2px;
}
.plainbtn {
    width: 25px;
    display: flex;
    justify-content: center;
}
.ico16 {
    width: 16px;
    height: 16px;
}
.ico20 {
    display: block;
    width: 20px;
    height: 20px;
    flex: none;
    color: #b5b5b5;
}
.ico20.faint {
    color: #7a7a7a;
}
.gap9 {
    margin-left: 9px;
}
.swatch {
    width: 21px;
    height: 20px;
}
.boxbtn {
    width: 17px;
    height: 20px;
    margin-left: 4px;
    display: flex;
    align-items: center;
    justify-content: center;
    border: 1px solid #666;
    border-radius: 2px;
}
.strokeprev {
    flex: 1;
    height: 100%;
    background: #e2e2e2;
    display: flex;
    align-items: center;
    padding: 0 10px 0 5px;
    border-radius: 2px 0 0 2px;
}
.strokeprev i {
    display: block;
    width: 100%;
    height: 8px;
    background: #000;
}
.fx-row {
    gap: 13px;
}
.fx {
    font: italic 16px "Liberation Serif", serif;
    color: #a8a8a8;
}
.fx small {
    font-size: 10px;
}
.opac {
    width: 14px;
    height: 14px;
    margin-left: 1px;
}
.objstyle {
    width: 176px;
    height: 22px;
    background: #e4e4e4;
    color: #222;
    font: 400 12px Roboto, sans-serif;
    display: flex;
    align-items: center;
    padding-left: 8px;
    border-radius: 2px 0 0 2px;
}
.row-end {
    justify-content: flex-end;
    padding-right: 4px;
}
.g11 {
    margin-left: 11px;
}
.bolt {
    width: 12px;
    height: 20px;
    margin-left: 108px;
}
.end-col {
    display: flex;
    flex-direction: column;
    gap: 13px;
    margin-left: 19px;
}

/* main area */
.workarea {
    flex: 1;
    min-height: 0;
    display: grid;
    grid-template-columns: 45px 1452px 2px 181px;
}
.toolbar {
    background: #535353;
    border-right: 1px solid #424242;
    display: flex;
    flex-direction: column;
    align-items: center;
    height: 818px;
    overflow: hidden;
}
.strip {
    width: 100%;
    height: 14px;
    flex: none;
    background: #474747;
    display: flex;
    align-items: center;
    padding-left: 7px;
    color: #8f8f8f;
    font-size: 11px;
    line-height: 1;
}
.strip.right {
    justify-content: flex-end;
    padding: 0 6px 0 0;
}
.pgrip {
    width: 22px;
    height: 4px;
    flex: none;
    margin: 4px auto;
}
.tools-grip {
    margin-bottom: 8.5px;
}
.tool {
    width: 31px;
    height: 26px;
    flex: none;
    display: flex;
    align-items: center;
    justify-content: center;
    position: relative;
}
.tool svg {
    width: 20px;
    height: 20px;
}
.tool.dark {
    background: #3c3c3c;
    border-radius: 2px;
}
.tool.big {
    height: 27px;
    margin-top: 3px;
}
.tool.sp2 { margin-top: 2px; }
.tool.sp4 { margin-top: 4px; }
.tool.sp5 { margin-top: 5px; }
.tool.view {
    margin-top: 6px;
    height: 24px;
}
.tool.lastbtn {
    margin-top: 8px;
}
.tool.sub::after {
    content: "";
    position: absolute;
    right: 1px;
    bottom: 1px;
    border: 3px solid transparent;
    border-right-color: #c8c8c8;
    border-bottom-color: #c8c8c8;
}
.colorswap {
    display: flex;
    gap: 7px;
    margin-top: 5px;
    height: 15px;
}
.fillstroke {
    width: 32px;
    height: 31px;
    margin-top: 3px;
    position: relative;
    flex: none;
}
.fs-stroke,
.fs-fill {
    position: absolute;
    width: 21px;
    height: 21px;
}
.fs-stroke {
    right: 0;
    bottom: 0;
}
.fs-fill {
    left: 0;
    top: 0;
}
.fmtrow {
    display: flex;
    align-items: center;
    gap: 5px;
    margin-top: 9px;
    height: 15px;
}
.fmtbtn {
    width: 15px;
    height: 14px;
    background: #3a3a3a;
    display: flex;
    align-items: center;
    justify-content: center;
    border-radius: 2px;
}
.fmtbtn i {
    display: block;
    width: 9px;
    height: 9px;
    background: #8a8a8a;
    border: 1px solid #aaa;
}
.fmt-t {
    font: 700 13px "Liberation Serif", serif;
    color: #bbb;
}
.toolend {
    width: 100%;
    height: 1px;
    margin-top: auto;
    margin-bottom: 98px;
    background: #777;
}

.center {
    display: flex;
    flex-direction: column;
    height: 818px;
    min-width: 0;
}
.tabbar {
    height: 31px;
    flex: none;
    background: #474747;
    border-top: 1px solid #3f3f3f;
    padding-left: 1px;
}
.tab {
    width: 228px;
    height: 30px;
    background: #575757;
    display: flex;
    align-items: center;
    font: 700 11.5px "Open Sans", sans-serif;
    color: #dcdcdc;
    padding-left: 15px;
    gap: 11px;
}
.tabx {
    font-size: 9px;
    font-family: "DejaVu Sans", sans-serif;
    font-weight: 400;
}
.hruler-row {
    height: 20px;
    flex: none;
    display: flex;
    border-top: 2px solid #3c3c3c;
    background: #1e1e1e;
}
.corner {
    width: 17px;
    flex: none;
    background: repeating-linear-gradient(90deg, #1e1e1e 0 2px, #333 2px 3px);
}
.hruler {
    width: 1418px;
    flex: none;
    display: flex;
    overflow: hidden;
}
.rulerend {
    flex: 1;
    background: #4d4d4d;
}
.hlead {
    width: 22px;
    flex: none;
}
.hcell {
    width: 67px;
    flex: none;
    padding-left: 2px;
    font: 600 12px/17px "Open Sans", sans-serif;
    color: #d8d8d8;
    border-left: 1px solid #8a8a8a;
    background:
        repeating-linear-gradient(90deg, #8a8a8a 0 1px, transparent 1px 8.375px) left bottom / 100% 2px no-repeat,
        repeating-linear-gradient(90deg, #8a8a8a 0 1px, transparent 1px 33.5px) left bottom / 100% 5px no-repeat;
}
.docrow {
    flex: 1;
    min-height: 0;
    display: flex;
}
.vruler {
    width: 17px;
    flex: none;
    background: #1e1e1e;
    overflow: hidden;
}
.vlead {
    height: 6px;
}
.vcell {
    height: 67px;
    padding: 2px 0 0 3px;
    font: 600 12px/13px "Open Sans", sans-serif;
    color: #d8d8d8;
    border-top: 1px solid #8a8a8a;
    background:
        repeating-linear-gradient(180deg, #8a8a8a 0 1px, transparent 1px 8.375px) right top / 2px 100% no-repeat,
        repeating-linear-gradient(180deg, #8a8a8a 0 1px, transparent 1px 33.5px) right top / 5px 100% no-repeat;
}
.canvas {
    width: 1418px;
    flex: none;
    background: #5f5f5f;
    overflow: hidden;
}
.page {
    width: 569px;
    height: 735px;
    margin: 8px 0 0 424px;
    padding: 32px 34px 33px;
    background: #fff;
    box-shadow: 2px 2px 0 #000;
}
.guide {
    height: 100%;
    border: 1px solid #d78ad7;
}
.vscroll {
    flex: 1;
    background: #4d4d4d;
    padding: 63px 1px 0 2px;
}
.vthumb {
    height: 607px;
    background: #6c6c6c;
    border-radius: 7px;
}
.statusbar {
    height: 18px;
    flex: none;
    display: flex;
    align-items: center;
    background: #4a4a4a;
    border-top: 1px solid #8a8a8a;
    font: 600 12px "Open Sans", sans-serif;
    color: #cfcfcf;
}
.st-zoom { margin-left: 15px; width: 45px; }
.st-c1 { margin-right: 8px; }
.st-nav { margin-left: 2px; margin-right: -13px; }
.st-page {
    width: 97px;
    height: 17px;
    margin-left: 0;
    display: flex;
    align-items: center;
    justify-content: space-between;
    background: #3f3f3f;
    padding-left: 7px;
}
.st-pagechev {
    width: 19px;
    display: flex;
    justify-content: center;
}
.st-nav2 { margin-left: 12px; }
.st-gauge { margin-left: 11px; }
.st-pre { margin-left: 18px; width: 110px; font-weight: 400; }
.st-c2 { margin-left: 0; }
.st-dot {
    width: 12px;
    height: 12px;
    margin-left: 15px;
    border-radius: 50%;
    background: #1f9a22;
    flex: none;
}
.st-err { margin-left: 6px; width: 65px; }
.st-c3 { margin-left: 3px; color: #8a8a8a; }
.hthumb {
    width: 527px;
    height: 17px;
    margin-left: 270px;
    background: #6a6a6a;
    border-radius: 0 8px 8px 0;
}
.st-split { margin-left: 60px; }

.panels {
    grid-column: 4;
    height: 818px;
    background: #535353;
    border-left: 1px solid #3a3a3a;
}
.workarea > .center {
    border-right: 2px solid #3a3a3a;
    width: 1454px;
}
.pgroup {
    border-bottom: 2px solid #3f3f3f;
}
.pgroup .pgrip {
    margin: 4px auto;
}
.prow {
    height: 30.6px;
    display: flex;
    align-items: center;
    padding-left: 11px;
    font: 700 12.3px "Open Sans", sans-serif;
    color: #dedede;
}
.prow svg,
.pglyph {
    width: 19px;
    height: 19px;
    margin-right: 10px;
    flex: none;
}
.pglyph {
    display: block;
    text-align: center;
    color: #b5b5b5;
    font-weight: 400;
}
.script {
    font: italic 21px/19px "Liberation Serif", serif;
}
.fxg {
    font: italic 20px/19px "Liberation Serif", serif;
}
.ag {
    font: 400 19px/19px "Open Sans", sans-serif;
    display: flex;
    align-items: center;
    gap: 1px;
}
.ag em {
    display: block;
    width: 2px;
    height: 17px;
    background: #b5b5b5;
}

/* Window menu */
.menu {
    position: absolute;
    left: 471px;
    top: 22px;
    width: 265px;
    height: 576px;
    padding-top: 4.4px;
    border-radius: 8px;
    background: linear-gradient(180deg, #bbbbbb 0%, #aeaeae 20%, #b4b4b4 24%, #dcdcdc 30%, #e6e6e6 40%, #e8e8e8 100%);
    box-shadow: 0 0 0 1px #8e8e8e, 0 3px 10px rgba(0, 0, 0, .35);
    color: #2d2d2d;
    font-size: 11.3px;
}
.mi {
    height: 19.28px;
    margin: 0 5px 0 4px;
    padding: 0 5px 0 17px;
    display: flex;
    align-items: center;
    justify-content: space-between;
    position: relative;
    white-space: nowrap;
}
.mi.sub::after {
    content: "";
    width: 5px;
    height: 5px;
    margin-right: 5px;
    border-top: 1.5px solid #333;
    border-right: 1.5px solid #333;
    transform: rotate(45deg);
}
.mi.on::before {
    content: "\2713";
    position: absolute;
    left: 3px;
    font: 700 12px "DejaVu Sans", sans-serif;
}
.mi.hot {
    background: #3e9e2a;
    color: #eef8e8;
    border-radius: 4px;
}
.mi.off {
    color: #b4b4b4;
}
.mi kbd {
    font: 400 11.5px "DejaVu Sans", sans-serif;
    color: #a4a4a4;
    margin-right: 2px;
}
.mi kbd small {
    font: 400 9px Inter, sans-serif;
    margin-left: 3px;
    margin-right: -3px;
}
.msep {
    height: 1px;
    margin: 4.4px 13px 4.400px;
    background: #c9c9c9;
}
.cursor {
    position: absolute;
    left: 650px;
    top: 119px;
    width: 11px;
    height: 17px;
}
```
